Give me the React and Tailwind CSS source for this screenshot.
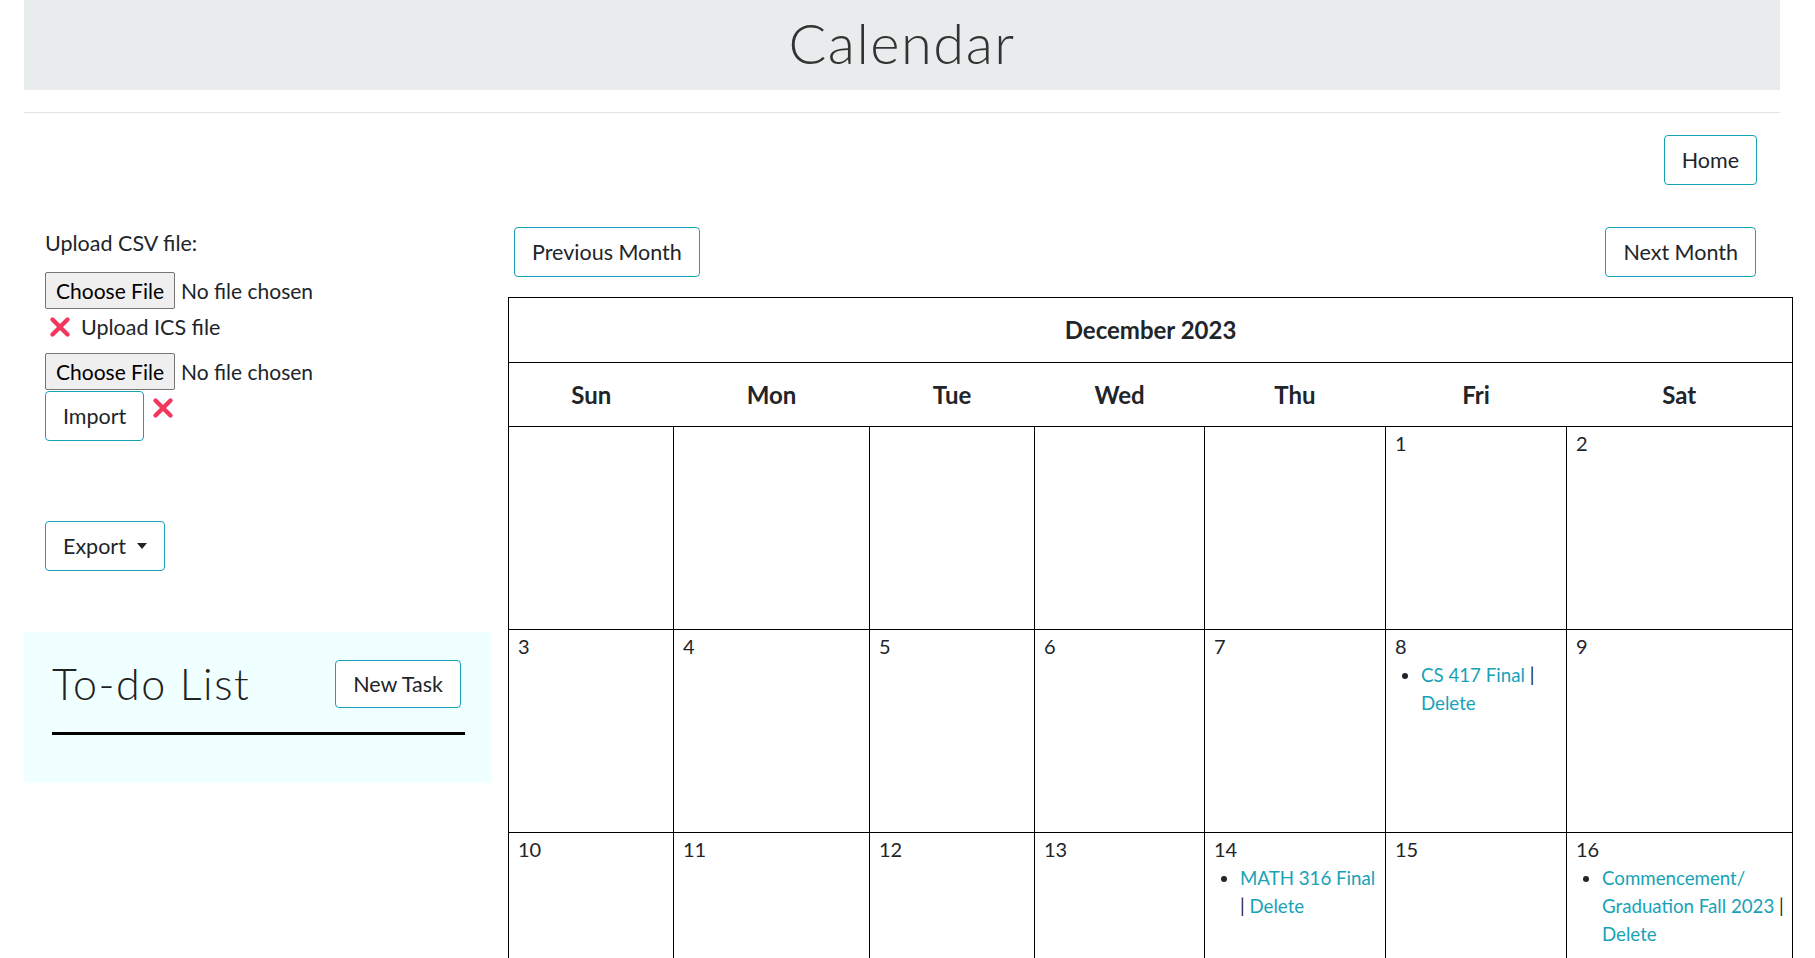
import { Fragment } from 'react';

const DAYS = ['Sun', 'Mon', 'Tue', 'Wed', 'Thu', 'Fri', 'Sat'];
const COLS = ['w-[165px]', 'w-[196px]', 'w-[165px]', 'w-[170px]', 'w-[181px]', 'w-[181px]', 'w-[226px]'];

const WEEKS = [
  [null, null, null, null, null, 1, 2],
  [3, 4, 5, 6, 7, 8, 9],
  [10, 11, 12, 13, 14, 15, 16],
  [17, 18, 19, 20, 21, 22, 23],
  [24, 25, 26, 27, 28, 29, 30],
  [31, null, null, null, null, null, null],
];

// events keyed by day of month
const EVENTS = {
  8: [{ id: 1, title: 'CS 417 Final' }],
  14: [{ id: 2, title: 'MATH 316 Final' }],
  16: [{ id: 3, title: <>Commencement/<wbr />Graduation Fall 2023</> }],
};

function RedX({ className = '' }) {
  return (
    <svg viewBox="0 0 24 24" className={`w-[24px] h-[24px] shrink-0 ${className}`}>
      <path d="M4.5 4.5 L19.5 19.5 M19.5 4.5 L4.5 19.5" stroke="#f2365c" strokeWidth="4.4" strokeLinecap="round" fill="none" />
    </svg>
  );
}

function OutlineBtn({ children, className = '' }) {
  return (
    <button className={`border border-[#17a2b8] rounded-[4px] px-[17px] py-[9px] leading-[30px] text-[21.5px] text-[#212529] bg-white ${className}`}>
      {children}
    </button>
  );
}

function FileInput() {
  return (
    <input
      type="file"
      className="block text-[21px] leading-[25px] text-[#212529] file:mr-[6px] file:border file:border-solid file:border-[#767676] file:bg-[#efefef] file:rounded-[2px] file:px-[10px] file:py-[5px] file:text-[#000] file:leading-[25px]"
    />
  );
}

function DayCell({ day }) {
  const evs = day ? EVENTS[day] || [] : [];
  return (
    <td className="align-top border border-black pl-[9px] pr-[5px] pt-[1px] h-[203px]">
      {day && <div className="text-[20px] leading-[30px] text-[#212529]">{day}</div>}
      {evs.length > 0 && (
        <ul className="list-disc pl-[26px] text-[18.7px] leading-[28px]">
          {evs.map((ev) => (
            <li key={ev.id}>
              <a href="#" className="text-[#17a2b8]">{ev.title}</a> | <a href="#" className="text-[#17a2b8]">Delete</a>
            </li>
          ))}
        </ul>
      )}
    </td>
  );
}

export default function App() {
  return (
    <div className="font-['Lato',sans-serif] text-[21.5px] leading-[30px] text-[#212529] bg-white min-h-screen">
      <div className="mx-[24px] w-[1756px]">
        {/* Header */}
        <div className="h-[90px] bg-[#e9ecec] flex items-center justify-center">
          <h1 className="text-[56px] leading-[67px] font-light text-[#333] tracking-[1.5px] pb-[5px]">Calendar</h1>
        </div>
        <hr className="mt-[22px] border-0 border-t border-[#e4e4e4]" />

        <div className="flex justify-end pr-[23px] mt-[22px]">
          <OutlineBtn>Home</OutlineBtn>
        </div>

        <div className="flex mt-[42px]">
          {/* Left column */}
          <div className="w-[484px] shrink-0">
            <div className="pl-[21px] pt-[1px]">
              <label className="block leading-[30px]">Upload CSV file:</label>
              <div className="mt-[14px]">
                <FileInput />
              </div>
              <div className="flex items-center mt-[3px] h-[30px]">
                <RedX className="ml-[3px]" />
                <span className="ml-[9px]">Upload ICS file</span>
              </div>
              <div className="mt-[11px]">
                <FileInput />
              </div>
              <div className="flex items-start mt-[1px]">
                <OutlineBtn>Import</OutlineBtn>
                <RedX className="ml-[7px] mt-[5px]" />
              </div>
              <div className="mt-[80px]">
                <OutlineBtn className="flex items-center">
                  Export
                  <span className="ml-[11px] w-0 h-0 border-t-[6px] border-t-[#212529] border-x-[5px] border-x-transparent border-b-0" />
                </OutlineBtn>
              </div>
            </div>

            {/* To-do */}
            <div className="mt-[61px] w-[468px] bg-[#f0ffff] pl-[28px] pr-[27px] pt-[28px] pb-[48px]">
              <div className="flex items-center justify-between">
                <h2 className="text-[43px] leading-[48px] font-light text-[#222] tracking-[1.5px]">To-do List</h2>
                <OutlineBtn className="mr-[4px] !py-[8px]">New Task</OutlineBtn>
              </div>
              <div className="mt-[24px] h-[3px] bg-black" />
            </div>
          </div>

          {/* Right column */}
          <div className="flex-1 min-w-0">
            <div className="flex justify-between pl-[6px] pr-[24px]">
              <OutlineBtn>Previous Month</OutlineBtn>
              <OutlineBtn>Next Month</OutlineBtn>
            </div>
            <table className="mt-[20px] w-[1284px] table-fixed border-collapse border border-black">
              <colgroup>
                {COLS.map((c, i) => <col key={i} className={c} />)}
              </colgroup>
              <thead>
                <tr>
                  <th colSpan={7} className="h-[65px] border-y border-black text-[24px] font-bold text-center">December 2023</th>
                </tr>
                <tr>
                  {DAYS.map((d) => (
                    <th key={d} className="h-[64px] border-y border-black text-[24px] font-bold text-center">{d}</th>
                  ))}
                </tr>
              </thead>
              <tbody>
                {WEEKS.map((w, wi) => (
                  <tr key={wi}>
                    {w.map((day, di) => (
                      <Fragment key={di}>
                        <DayCell day={day} />
                      </Fragment>
                    ))}
                  </tr>
                ))}
              </tbody>
            </table>
          </div>
        </div>
      </div>
    </div>
  );
}
